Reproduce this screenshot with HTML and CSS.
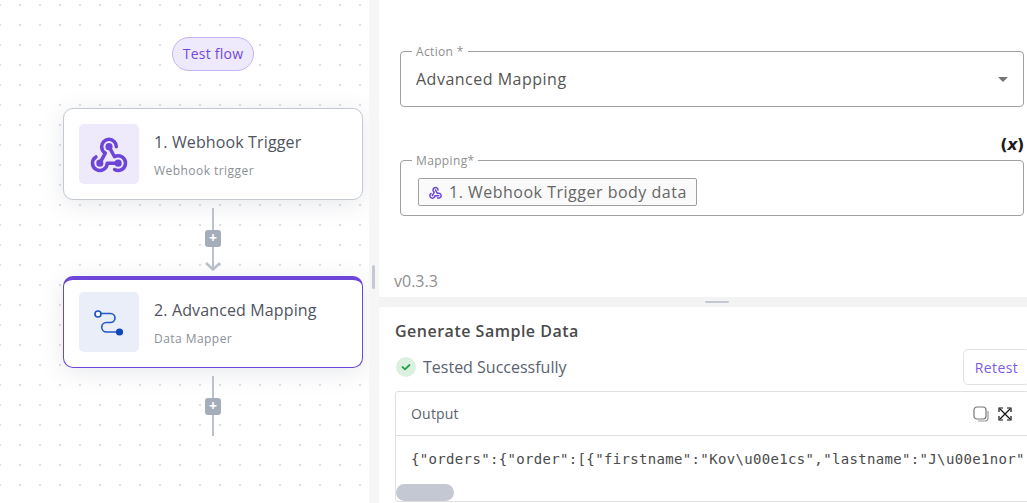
FILE: index.html
```html
<!DOCTYPE html>
<html lang="en">
<head>
<meta charset="utf-8">
<title>Flow editor</title>
<link rel="stylesheet" href="styles.css">
</head>
<body>
<div class="app">
  <main class="canvas">
    <button class="test-flow">Test flow</button>
    <article class="node">
      <div class="node-icon node-icon-purple">
        <svg width="44" height="44" viewBox="0 0 24 24" fill="none" stroke="#6d45d8" stroke-width="1.9" stroke-linecap="round" stroke-linejoin="round">
          <path d="M4.876 13.61a4 4 0 1 0 6.124 3.39h6"/>
          <path d="M15.066 20.502a4 4 0 1 0 1.934 -7.502c-.706 0 -1.424 .179 -2 .5l-3 -5.5"/>
          <path d="M16 8a4 4 0 1 0 -8 0c0 1.506 .77 2.818 2 3.5l-3 5.5"/>
          <circle cx="7" cy="17" r="1" fill="#6d45d8"/>
          <circle cx="12" cy="8" r="1" fill="#6d45d8"/>
          <circle cx="17" cy="17" r="1" fill="#6d45d8"/>
        </svg>
      </div>
      <div class="node-text">
        <div class="node-title">1. Webhook Trigger</div>
        <div class="node-sub">Webhook trigger</div>
      </div>
    </article>
    <div class="connector connector-arrow">
      <span class="line line-top"></span>
      <span class="plus">+</span>
      <span class="line line-mid"></span>
      <svg class="arrow" width="16" height="9" viewBox="0 0 16 9" fill="none" stroke="#bcc2cc" stroke-width="2.5"><path d="M1 1 L8 7.5 L15 1"/></svg>
    </div>
    <article class="node node-active">
      <div class="node-icon node-icon-blue">
        <svg width="60" height="60" viewBox="0 0 60 60" fill="none">
          <path d="M22 21.5H31.5a4.5 4.5 0 0 1 0 9H27.5a4.75 4.75 0 0 0 0 9.5H37" stroke="#2158c4" stroke-width="1.6"/>
          <circle cx="19" cy="22" r="3" fill="#fff" stroke="#1a50bf" stroke-width="1.6"/>
          <circle cx="40.5" cy="40" r="3.6" fill="#0f47b8"/>
        </svg>
      </div>
      <div class="node-text">
        <div class="node-title">2. Advanced Mapping</div>
        <div class="node-sub">Data Mapper</div>
      </div>
    </article>
    <div class="connector connector-end">
      <span class="line line-top2"></span>
      <span class="plus">+</span>
      <span class="line line-end"></span>
    </div>
  </main>

  <div class="v-divider"><span class="v-handle"></span></div>

  <section class="panel">
    <div class="settings">
      <fieldset class="field field-action">
        <legend>Action *</legend>
        <span class="field-value">Advanced Mapping</span>
        <span class="caret"></span>
      </fieldset>
      <div class="var-toggle"><span>(</span><i>x</i><span>)</span></div>
      <fieldset class="field field-mapping">
        <legend>Mapping*</legend>
        <span class="chip">
          <svg width="15" height="15" viewBox="0 0 24 24" fill="none" stroke="#6d45d8" stroke-width="2.4" stroke-linecap="round" stroke-linejoin="round">
            <path d="M4.876 13.61a4 4 0 1 0 6.124 3.39h6"/>
            <path d="M15.066 20.502a4 4 0 1 0 1.934 -7.502c-.706 0 -1.424 .179 -2 .5l-3 -5.5"/>
            <path d="M16 8a4 4 0 1 0 -8 0c0 1.506 .77 2.818 2 3.5l-3 5.5"/>
          </svg>
          1. Webhook Trigger body data
        </span>
      </fieldset>
      <div class="version">v0.3.3</div>
    </div>

    <div class="h-divider"><span class="h-handle"></span></div>

    <div class="sample">
      <h2 class="sample-title">Generate Sample Data</h2>
      <div class="status-row">
        <span class="status-icon">
          <svg width="12" height="12" viewBox="0 0 12 12" fill="none" stroke="#27a04a" stroke-width="1.8" stroke-linecap="round" stroke-linejoin="round"><path d="M2.5 6l2.5 2.3L9.5 4"/></svg>
        </span>
        <span class="status-text">Tested Successfully</span>
        <button class="retest">Retest</button>
      </div>
      <div class="output">
        <div class="output-head">
          <span class="output-label">Output</span>
          <svg class="icon-copy" width="16" height="16" viewBox="0 0 16 16" fill="none" stroke="#777" stroke-width="1.2"><rect x="1" y="1" width="12" height="12" rx="3"/><path d="M15 5v7a3 3 0 0 1-3 3H5" stroke="#999"/></svg>
          <svg class="icon-expand" width="14" height="14" viewBox="0 0 14 14" fill="none" stroke="#111" stroke-width="1.2"><path d="M2 2l10 10M12 2L2 12"/><path d="M1 5V1h4M9 1h4v4M13 9v4H9M5 13H1V9" /></svg>
        </div>
        <div class="output-body">
          <code class="json">{"orders":{"order":[{"firstname":"Kov\u00e1cs","lastname":"J\u00e1nor"</code>
          <span class="scroll-thumb"></span>
        </div>
      </div>
    </div>
  </section>
</div>
</body>
</html>
```
FILE: styles.css
```css
* { box-sizing: border-box; }
html, body { margin: 0; height: 100%; overflow: hidden; background: #fff; }
body { font-family: "Open Sans", "Noto Sans", sans-serif; color: #444; }
.app { display: flex; width: 1027px; height: 503px; overflow: hidden; }

/* canvas */
.canvas {
  flex: none; width: 369px; height: 503px;
  display: flex; flex-direction: column; align-items: center;
  padding: 37px 6px 0 63px;
  background-color: #fff;
  background-image: radial-gradient(circle at center, #e0e0e0 0, #e0e0e0 1.1px, transparent 1.6px);
  background-size: 20px 20px;
  background-position: 10px -5px;
}
.test-flow {
  width: 82px; height: 34px; padding: 0 0 2px;
  border: 1px solid #c5b3f1; border-radius: 17px;
  background: #efe9fc; color: #6f4adf;
  font: 400 14px "Open Sans", sans-serif; letter-spacing: .25px;
  margin-bottom: 37px;
}
.node {
  flex: none; width: 300px; height: 92px;
  display: flex; align-items: center; gap: 15px;
  padding: 0 15px;
  background: #fff;
  border: 1px solid #c3c8d2; border-radius: 10px;
  box-shadow: 0 4px 24px rgba(70, 80, 110, .13);
}
.node-active { border: 1px solid #6d45d8; border-top-width: 4px; padding-bottom: 3px; }
.node-icon {
  flex: none; width: 60px; height: 60px; border-radius: 5px;
  display: flex; align-items: center; justify-content: center;
}
.node-icon-purple { background: #efe9fc; }
.node-icon-blue { background: #e9eef9; }
.node-text { padding-top: 1px; }
.node-title { font-size: 16px; line-height: 22px; color: #4f5460; letter-spacing: .13px; }
.node-sub { font-size: 12px; line-height: 16px; margin-top: 10px; color: #8b8f98; letter-spacing: .45px; }

.connector { flex: none; display: flex; flex-direction: column; align-items: center; width: 16px; }
.connector-arrow { height: 68px; margin-top: 8px; margin-bottom: 0; }
.connector-end { margin-top: 8px; }
.line { display: block; width: 2px; background: #bcc2cc; flex: none; }
.line-top { height: 22px; }
.line-mid { height: 22px; }
.arrow { flex: none; margin-top: -7px; }
.line-top2 { height: 22px; }
.line-end { height: 21px; }
.plus {
  flex: none; width: 16px; height: 17px; border-radius: 3px;
  background: #a5adba; color: #fff;
  font: 700 14px/16px "Open Sans", sans-serif; text-align: center;
}

/* dividers */
.v-divider { flex: none; width: 10px; height: 503px; background: #f6f6f6; padding: 265px 0 0 3px; }
.v-handle { display: block; width: 3px; height: 24px; background: #c3c8d2; border-radius: 2px; }
.h-divider { height: 10px; background: #f3f3f3; display: flex; justify-content: center; padding-top: 4px; }
.h-handle { display: block; width: 24px; height: 2px; background: #c3c8d2; border-radius: 1px; }

/* right panel */
.panel { flex: none; width: 676px; height: 503px; display: flex; flex-direction: column; }
.settings { flex: none; height: 297px; padding: 44px 31px 0 21px; }
.field { margin: 0; border: 1px solid #a0a0a0; border-radius: 4px; position: relative; min-width: 0; }
.field legend {
  padding: 2px 4px 0;
  font-size: 12px; line-height: 12px; color: #8f8f8f; letter-spacing: .35px;
}
.field-action { height: 63px; padding: 9px 15px 0; display: flex; align-items: flex-start; }
.field-action legend { margin-left: -4px; }
.field-value { font-size: 16px; line-height: 24px; color: #555; letter-spacing: .5px; }
.caret {
  position: absolute; right: 15px; top: 19px;
  border-left: 5px solid transparent; border-right: 5px solid transparent; border-top: 5px solid #757575;
}
.var-toggle {
  text-align: right; font: 700 16px/20px "DejaVu Sans", sans-serif; color: #1c1c1c; letter-spacing: -.4px;
  margin-top: 27px; height: 19px; padding-top: 1px;
}
.var-toggle i { font-style: italic; }
.field-mapping { height: 63px; padding: 11px 17px 0; }
.field-mapping legend { margin-left: -6px; }
.chip {
  display: inline-flex; align-items: center; gap: 6px;
  height: 28px; width: 279px; padding: 0 9px 0 9px;
  background: #fafafa; border: 1px solid #a0a0a0; border-radius: 2px;
  font-size: 16px; color: #666; letter-spacing: .5px; white-space: nowrap;
}
.version { margin-top: 55px; margin-left: -6px; font-size: 16px; line-height: 20px; color: #8f8f8f; }

.sample { flex: 1; padding: 13px 16px 0; min-height: 0; }
.sample-title { margin: 0; font-size: 16px; line-height: 22px; font-weight: 600; color: #4a4a4a; letter-spacing: .5px; }
.status-row { display: flex; align-items: center; height: 36px; margin-top: 7px; margin-bottom: 6px; }
.status-icon {
  flex: none; width: 20px; height: 20px; margin-left: 1px; border-radius: 50%;
  background: #dcf0e0; display: flex; align-items: center; justify-content: center;
}
.status-text { margin-left: 7px; font-size: 16px; color: #5a6270; }
.retest {
  margin-left: auto; margin-right: 9px; width: 67px; height: 36px; padding: 0;
  background: #fff; border: 1px solid #e2e2e2; border-radius: 5px;
  font: 400 14px "Open Sans", sans-serif; color: #7c5be6; letter-spacing: .4px;
}
.output { border: 1px solid #e0e0e0; border-radius: 3px; height: 111px; }
.output-head { height: 44px; display: flex; align-items: center; padding: 0 26px 0 15px; border-bottom: 1px solid #e0e0e0; }
.output-label { font-size: 14px; color: #5a6270; margin-right: auto; letter-spacing: .2px; }
.icon-copy { margin-right: 9px; }
.output-body { position: relative; height: 65px; padding: 13px 15px 0; overflow: hidden; }
.json {
  display: block; white-space: nowrap;
  font: 400 14px/20px "DejaVu Sans Mono", monospace; letter-spacing: .34px; color: #4a4a4a;
}
.scroll-thumb {
  position: absolute; left: 0; bottom: 0; width: 58px; height: 17px;
  background: #c3c8d2; border-radius: 9px;
}
```
